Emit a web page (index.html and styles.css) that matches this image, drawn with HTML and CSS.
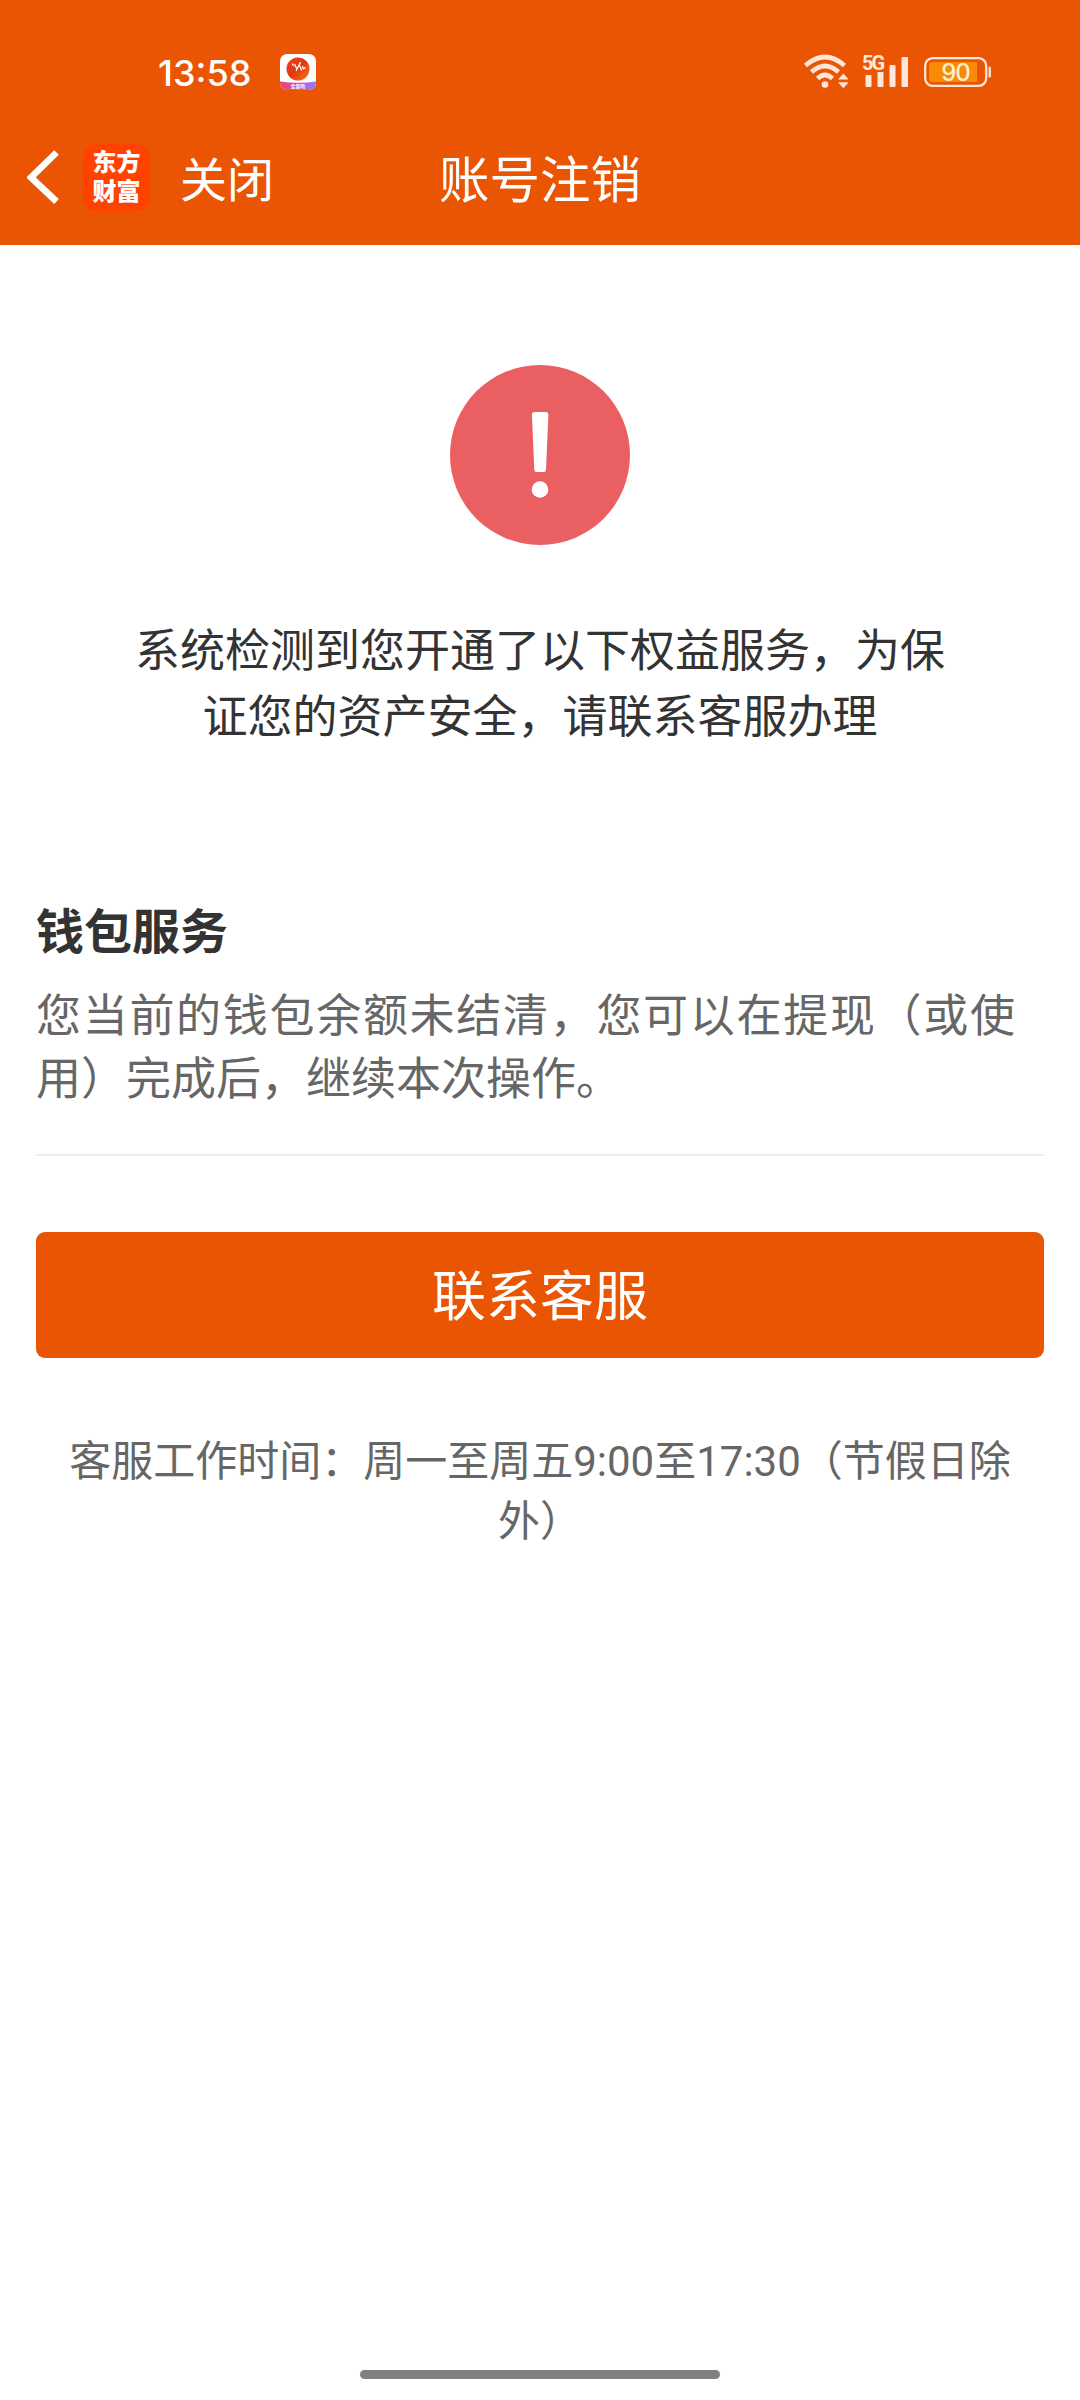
FILE: index.html
```
<!DOCTYPE html>
<html lang="zh-CN">
<head>
    <meta charset="UTF-8">
    <meta name="viewport" content="width=device-width, initial-scale=1.0">
    <title>账号注销</title>
    <link rel="stylesheet" href="styles.css">
</head>
<body>
    <header class="header">
        <div class="status">
            <span class="time">13:58</span>
            <svg class="app-icon" width="36" height="36" viewBox="0 0 36 36">
                <defs>
                    <linearGradient id="ball" x1="0" y1="0" x2="1" y2="1">
                        <stop offset="0" stop-color="#f0401a"/>
                        <stop offset="0.5" stop-color="#e2380c"/>
                        <stop offset="1" stop-color="#ff7a1a"/>
                    </linearGradient>
                    <linearGradient id="band">
                        <stop offset="0" stop-color="#f0435a"/>
                        <stop offset="0.5" stop-color="#c05bc8"/>
                        <stop offset="1" stop-color="#8a7cff"/>
                    </linearGradient>
                    <clipPath id="round"><rect width="36" height="36" rx="7"/></clipPath>
                </defs>
                <g clip-path="url(#round)">
                    <rect width="36" height="36" fill="#fff"/>
                    <path d="M0 27.5Q18 30 36 27.5V36H0z" fill="url(#band)"/>
                    <circle cx="18" cy="15" r="11.5" fill="url(#ball)"/>
                    <path d="M12.500 10l.8 1.500M14.800 10.500l2 4.500M20.300 8.500l-4 8M19.800 12l1.600 4M22.500 12.500l1 2.500M24.700 13.500l.3 1" fill="none" stroke="#fff" stroke-width="1.3" stroke-linecap="round"/>
                    <text x="18" y="34" class="app-label">全新听</text>
                </g>
            </svg>
            <div class="status-right">
                <svg class="wifi" width="46" height="36" viewBox="0 0 46 36" fill="none" stroke="#ffe6d8" stroke-width="4.600">
                    <path d="M1.500 11.500Q21 -5.500 40.500 11.500"/>
                    <path d="M7.500 18Q21 6 34.500 18"/>
                    <path d="M13.500 24.500Q21 17.500 28.500 24.500"/>
                    <circle cx="21" cy="30.500" r="3.300" fill="#ffe6d8" stroke="none"/>
                    <path d="M34 25.500l5.300-6 5.300 6zM34 28.200l5.300 6 5.300-6z" fill="#ffe6d8" stroke="none"/>
                </svg>
                <svg class="signal" width="48" height="42" viewBox="0 -3 48 42" fill="#ffe6d8">
                    <text x="0" y="16" class="net">5G</text>
                    <rect x="3.500" y="21" width="6" height="12" rx="1"/>
                    <rect x="15.500" y="18" width="6" height="15" rx="1"/>
                    <rect x="27.500" y="11" width="6" height="22" rx="1"/>
                    <rect x="39.500" y="3" width="6.500" height="30" rx="1"/>
                </svg>
                <svg class="battery" width="68" height="32" viewBox="0 0 68 32">
                    <rect x="1.200" y="2.200" width="61" height="27.600" rx="7.500" fill="none" stroke="#ffe6d8" stroke-width="2.200"/>
                    <path d="M8 6H53V26H8Q5 26 5 23V9Q5 6 8 6z" fill="#f88a05"/>
                    <rect x="64.500" y="10.500" width="2.500" height="11" rx="1.200" fill="#ffd9c4"/>
                    <text x="31.500" y="25" class="level">90</text>
                </svg>
            </div>
        </div>

        <div class="nav">
            <div class="nav-left">
                <svg class="back" width="34" height="56" viewBox="0 0 34 56">
                    <path d="M29.500 3.500L4 28.500L29.500 52.500" fill="none" stroke="#fff" stroke-width="6.600"/>
                </svg>
                <div class="logo">东方<br>财富</div>
                <a class="close">关闭</a>
            </div>
            <h1 class="title">账号注销</h1>
        </div>
    </header>

    <main class="content">
        <svg class="warn" width="180" height="180" viewBox="0 0 180 180">
            <circle cx="90" cy="90" r="90" fill="#ea6062"/>
            <path d="M84 47H96.300Q98.500 47 98.400 49.500L96 104.500Q95.900 107 94 107H86.300Q84.400 107 84.300 104.500L81.900 49.500Q81.800 47 84 47z" fill="#fff"/>
            <circle cx="90" cy="124.500" r="8.300" fill="#fff"/>
        </svg>
        <p class="message">系统检测到您开通了以下权益服务，为保证您的资产安全，请联系客服办理</p>

        <section class="service">
            <h2>钱包服务</h2>
            <p>您当前的钱包余额未结清，您可以在提现（或使用）完成后，继续本次操作。</p>
        </section>

        <button class="contact">联系客服</button>
        <p class="hours">客服工作时间：周一至周五9:00至17:30（节假日除外）</p>
    </main>

    <div class="home-bar"></div>
</body>
</html>
```
FILE: styles.css
```
* {
    box-sizing: border-box;
}

body {
    margin: 0;
    height: 2400px;
    display: flex;
    flex-direction: column;
    background-color: #fff;
    font-family: Roboto, "Noto Sans CJK SC", sans-serif;
    color: #333;
}

h1, h2, p {
    margin: 0;
    font-weight: normal;
}

svg {
    display: block;
    flex-shrink: 0;
}

/* 顶部 */
.header {
    height: 245px;
    background-color: #ea5504;
    color: #fff;
}

.status {
    display: flex;
    align-items: center;
    height: 110px;
    padding: 34px 88px 0 158px;
}

.time {
    width: 122px;
    padding-top: 2px;
    font-family: Inter, sans-serif;
    font-size: 36px;
    font-weight: 500;
    line-height: 40px;
}

.app-label {
    font-size: 5px;
    font-weight: bold;
    fill: #fff;
    text-anchor: middle;
}

.status-right {
    display: flex;
    align-items: center;
    margin-left: auto;
}

.signal {
    margin-left: 12px;
}

.battery {
    margin-left: 14px;
}

.net {
    font-size: 20px;
    font-weight: bold;
    letter-spacing: -2px;
}

.level {
    font-family: Inter, sans-serif;
    font-size: 24px;
    font-weight: 500;
    fill: #ffeecb;
    text-anchor: middle;
    letter-spacing: -1px;
}

.nav {
    display: grid;
    grid-template-columns: 1fr auto 1fr;
    align-items: center;
    height: 135px;
    padding-bottom: 1px;
}

.nav-left {
    display: flex;
    align-items: center;
    height: 135px;
    padding: 0 0 1px 27px;
}

.logo {
    width: 67px;
    height: 67px;
    margin: 0 30px 0 22px;
    padding-top: 5px;
    border-radius: 14px;
    background-color: #ff4200;
    font-size: 24px;
    font-weight: 900;
    line-height: 29px;
    text-align: center;
}

.close {
    padding-top: 7px;
    font-size: 47px;
    line-height: 70px;
}

.title {
    padding-top: 7px;
    font-size: 50.5px;
    line-height: 70px;
}

/* 内容 */
.content {
    flex: 1;
    display: flex;
    flex-direction: column;
    padding: 120px 36px 0;
}

.warn {
    align-self: center;
}

.message {
    width: 820px;
    margin: 74px auto 0;
    font-size: 45px;
    line-height: 66px;
    text-align: center;
}

.service {
    margin-top: 148px;
    padding-bottom: 43px;
    border-bottom: 2px solid #eee;
}

.service h2 {
    font-size: 48px;
    font-weight: bold;
    line-height: 68px;
}

.service p {
    width: 979px;
    margin-top: 18px;
    color: #666;
    font-size: 45px;
    line-height: 63px;
    text-align: justify;
}

.contact {
    height: 126px;
    margin-top: 76px;
    padding: 0 0 6px;
    border: none;
    border-radius: 9px;
    background-color: #ea5504;
    color: #fff;
    font-family: inherit;
    font-size: 54px;
}

.hours {
    margin-top: 74px;
    padding: 0 24px;
    color: #666;
    font-size: 42px;
    line-height: 60px;
    text-align: center;
}

.home-bar {
    width: 360px;
    height: 9px;
    margin: 0 auto 21px;
    border-radius: 5px;
    background-color: #808080;
}
```
